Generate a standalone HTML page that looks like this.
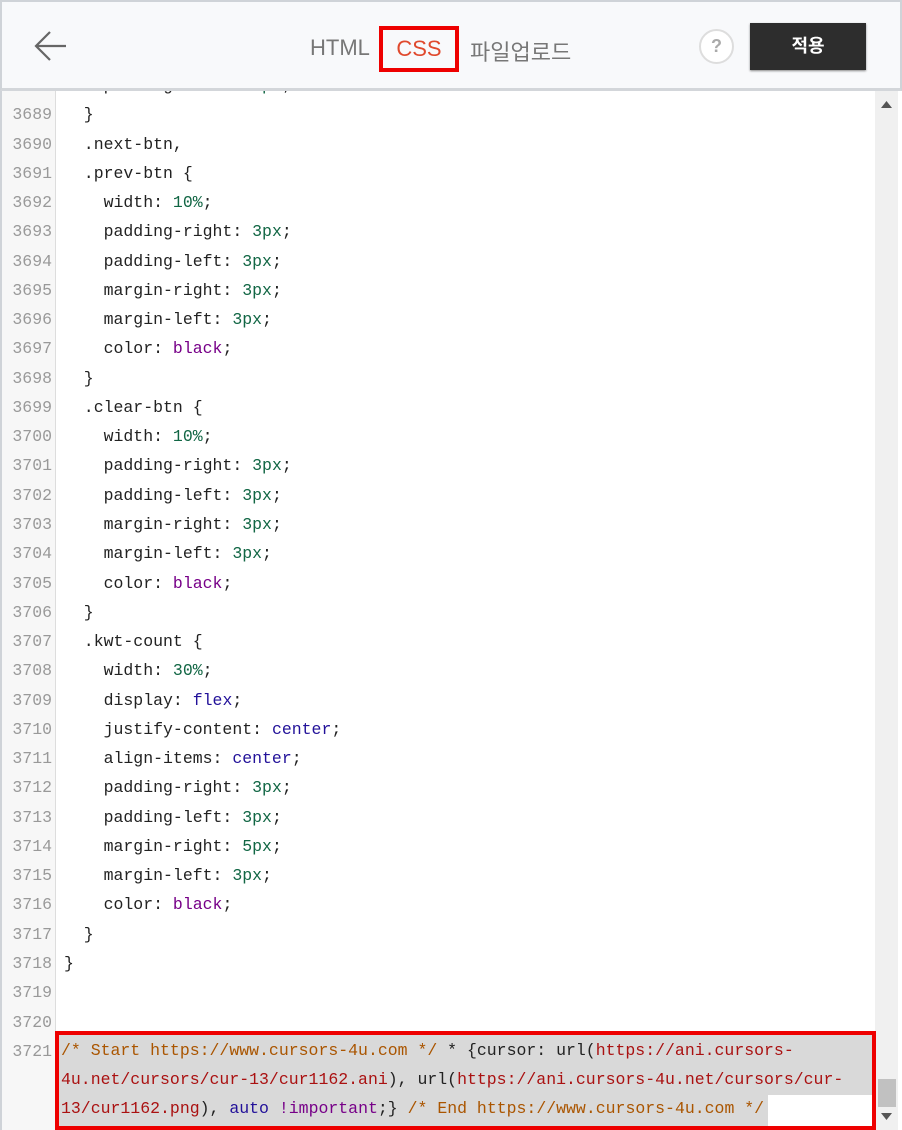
<!DOCTYPE html>
<html><head><meta charset="utf-8">
<style>
*{margin:0;padding:0;box-sizing:border-box}
body{width:902px;height:1130px;overflow:hidden;background:#fff;position:relative;font-family:"Liberation Sans","Noto Sans CJK KR",sans-serif}
#hdr{position:absolute;left:0;top:0;width:902px;height:91px;background:#f8f9fb;border:2px solid #cfd3d8;border-bottom:3px solid #d3d6da;z-index:5}
#back{position:absolute;left:32px;top:28px}
.tab{position:absolute;top:33px;font-size:22px;color:#777}
#css{position:absolute;left:377px;top:24px;width:80px;height:46px;border:4px solid #ee0000;color:#e0492d;font-size:22px;text-align:center;line-height:38px}
#q{position:absolute;left:697px;top:27px;width:35px;height:35px;border:2px solid #ddd;border-radius:50%;background:#fff;color:#aaa;font-weight:bold;font-size:18px;text-align:center;line-height:31px}
#apply{position:absolute;left:748px;top:21px;width:116px;height:47px;background:#2d2d2d;color:#fff;font-size:18px;font-weight:bold;text-align:center;line-height:47px;box-shadow:0 1px 2px #888}
#edit{position:absolute;left:0;top:91px;width:902px;height:1039px;overflow:hidden;border-left:2px solid #cfd3d8}
#gut{position:absolute;left:0;top:0;width:54px;height:1039px;background:#f7f7f7;border-right:1px solid #ddd}
#code{position:absolute;left:0;top:-20px;width:870px;font-family:"Liberation Mono",monospace;font-size:16.5px;line-height:29.28px;color:#222}
.ln{display:block;position:relative;height:29.28px}
.n{position:absolute;left:0;width:50px;text-align:right;color:#999}
.c{position:absolute;left:62px;white-space:pre}
.num{color:#164}.kw{color:#708}.at{color:#219}.cm{color:#a50}.st{color:#a11}
#sb{position:absolute;left:875px;top:91px;width:23px;height:1039px;background:#f0f0f0}
#hl{position:absolute;left:55px;top:1031px;width:821px;height:99px;background:#d9d9d9;border:4px solid #ee0000;z-index:3}
#hl div{position:absolute;left:2px;font-family:"Liberation Mono",monospace;font-size:16.5px;color:#222;white-space:pre}
</style></head><body>
<div id="hdr">
<svg id="back" width="34" height="32" viewBox="0 0 34 32"><path d="M16 2 L2 16 L16 30 M2 16 H32" stroke="#666" stroke-width="2.2" fill="none"/></svg>
<div class="tab" style="left:308px">HTML</div>
<div id="css">CSS</div>
<div class="tab" style="left:468px">파일업로드</div>
<div id="q">?</div>
<div id="apply">적용</div>
</div>
<div id="edit">
<div id="gut"></div>
<div id="code"><span class="ln"><span class="n">3688</span><span class="c">    padding-left: <span class="num">10px</span>;</span></span><span class="ln"><span class="n">3689</span><span class="c">  }</span></span><span class="ln"><span class="n">3690</span><span class="c">  .next-btn,</span></span><span class="ln"><span class="n">3691</span><span class="c">  .prev-btn {</span></span><span class="ln"><span class="n">3692</span><span class="c">    width: <span class="num">10%</span>;</span></span><span class="ln"><span class="n">3693</span><span class="c">    padding-right: <span class="num">3px</span>;</span></span><span class="ln"><span class="n">3694</span><span class="c">    padding-left: <span class="num">3px</span>;</span></span><span class="ln"><span class="n">3695</span><span class="c">    margin-right: <span class="num">3px</span>;</span></span><span class="ln"><span class="n">3696</span><span class="c">    margin-left: <span class="num">3px</span>;</span></span><span class="ln"><span class="n">3697</span><span class="c">    color: <span class="kw">black</span>;</span></span><span class="ln"><span class="n">3698</span><span class="c">  }</span></span><span class="ln"><span class="n">3699</span><span class="c">  .clear-btn {</span></span><span class="ln"><span class="n">3700</span><span class="c">    width: <span class="num">10%</span>;</span></span><span class="ln"><span class="n">3701</span><span class="c">    padding-right: <span class="num">3px</span>;</span></span><span class="ln"><span class="n">3702</span><span class="c">    padding-left: <span class="num">3px</span>;</span></span><span class="ln"><span class="n">3703</span><span class="c">    margin-right: <span class="num">3px</span>;</span></span><span class="ln"><span class="n">3704</span><span class="c">    margin-left: <span class="num">3px</span>;</span></span><span class="ln"><span class="n">3705</span><span class="c">    color: <span class="kw">black</span>;</span></span><span class="ln"><span class="n">3706</span><span class="c">  }</span></span><span class="ln"><span class="n">3707</span><span class="c">  .kwt-count {</span></span><span class="ln"><span class="n">3708</span><span class="c">    width: <span class="num">30%</span>;</span></span><span class="ln"><span class="n">3709</span><span class="c">    display: <span class="at">flex</span>;</span></span><span class="ln"><span class="n">3710</span><span class="c">    justify-content: <span class="at">center</span>;</span></span><span class="ln"><span class="n">3711</span><span class="c">    align-items: <span class="at">center</span>;</span></span><span class="ln"><span class="n">3712</span><span class="c">    padding-right: <span class="num">3px</span>;</span></span><span class="ln"><span class="n">3713</span><span class="c">    padding-left: <span class="num">3px</span>;</span></span><span class="ln"><span class="n">3714</span><span class="c">    margin-right: <span class="num">5px</span>;</span></span><span class="ln"><span class="n">3715</span><span class="c">    margin-left: <span class="num">3px</span>;</span></span><span class="ln"><span class="n">3716</span><span class="c">    color: <span class="kw">black</span>;</span></span><span class="ln"><span class="n">3717</span><span class="c">  }</span></span><span class="ln"><span class="n">3718</span><span class="c">}</span></span><span class="ln"><span class="n">3719</span><span class="c"></span></span><span class="ln"><span class="n">3720</span><span class="c"></span></span><span class="ln"><span class="n">3721</span><span class="c"></span></span></div>
</div>
<div id="sb">
<svg style="position:absolute;left:6px;top:10px" width="11" height="8"><path d="M0 7 L5.5 0 L11 7Z" fill="#555"/></svg>
<div style="position:absolute;left:3px;top:988px;width:18px;height:28px;background:#c1c1c1"></div>
<svg style="position:absolute;left:6px;top:1022px" width="11" height="8"><path d="M0 0 L5.5 7 L11 0Z" fill="#555"/></svg>
</div>
<div id="hl">
<div style="top:6px"><span class="cm">/* Start https://www.cursors-4u.com */</span> * {cursor: url(<span class="st">https://ani.cursors-</span></div>
<div style="top:35px"><span class="st">4u.net/cursors/cur-13/cur1162.ani</span>), url(<span class="st">https://ani.cursors-4u.net/cursors/cur-</span></div>
<div style="top:64px"><span class="st">13/cur1162.png</span>), <span class="at">auto</span> <span class="kw">!important</span>;} <span class="cm">/* End https://www.cursors-4u.com */</span></div>
<div style="left:709px;top:60px;width:104px;height:31px;background:#fff"></div>
</div>
</body></html>
